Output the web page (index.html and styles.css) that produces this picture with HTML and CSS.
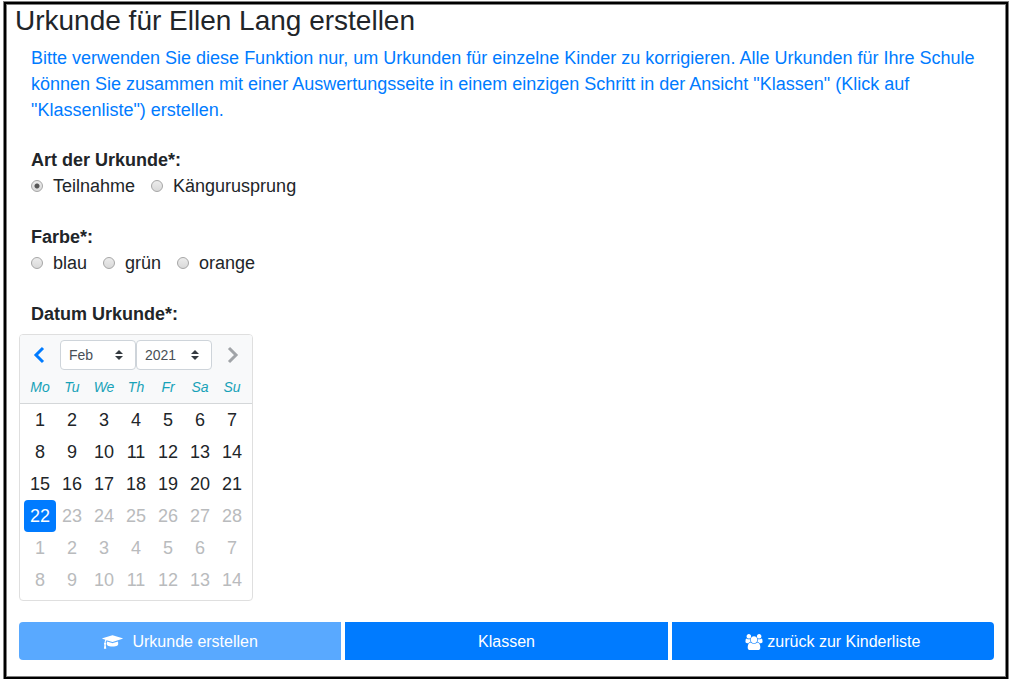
FILE: index.html
```html
<!DOCTYPE html>
<html lang="de">
<head>
<meta charset="utf-8">
<meta name="viewport" content="width=device-width, initial-scale=1">
<title>Urkunde für Ellen Lang erstellen</title>
<link rel="stylesheet" href="styles.css">
</head>
<body>
<main class="panel">
  <h1 class="title">Urkunde für Ellen Lang erstellen</h1>
  <form class="form">
    <p class="hint">Bitte verwenden Sie diese Funktion nur, um Urkunden für einzelne Kinder zu korrigieren. Alle Urkunden für Ihre Schule können Sie zusammen mit einer Auswertungsseite in einem einzigen Schritt in der Ansicht "Klassen" (Klick auf "Klassenliste") erstellen.</p>

    <div class="group" role="radiogroup" aria-labelledby="kind-label">
      <div class="group-label" id="kind-label">Art der Urkunde*:</div>
      <div class="options">
        <label class="option"><input class="radio" type="radio" name="kind" checked>Teilnahme</label>
        <label class="option"><input class="radio" type="radio" name="kind">Kängurusprung</label>
      </div>
    </div>

    <div class="group" role="radiogroup" aria-labelledby="color-label">
      <div class="group-label" id="color-label">Farbe*:</div>
      <div class="options">
        <label class="option"><input class="radio" type="radio" name="color">blau</label>
        <label class="option"><input class="radio" type="radio" name="color">grün</label>
        <label class="option"><input class="radio" type="radio" name="color">orange</label>
      </div>
    </div>

    <div class="group-label" id="date-label">Datum Urkunde*:</div>
    <div class="calendar" role="group" aria-labelledby="date-label">
      <div class="calendar-nav">
        <button class="arrow" type="button" aria-label="Previous month"><svg width="12" height="18" viewBox="0 0 12 18"><path d="M10 2 3 9l7 7"/></svg></button>
        <span class="picker">
          <select class="picker-select" aria-label="Select month"><option>Feb</option></select>
          <svg class="picker-caret" width="8" height="10" viewBox="0 0 8 10"><path d="M4 0 0 4h8zM4 10 0 6h8z"/></svg>
        </span>
        <span class="picker">
          <select class="picker-select" aria-label="Select year"><option>2021</option></select>
          <svg class="picker-caret" width="8" height="10" viewBox="0 0 8 10"><path d="M4 0 0 4h8zM4 10 0 6h8z"/></svg>
        </span>
        <button class="arrow arrow-next" type="button" aria-label="Next month" disabled><svg width="12" height="18" viewBox="0 0 12 18"><path d="m2 2 7 7-7 7"/></svg></button>
      </div>
      <table class="month">
        <thead class="weekdays">
          <tr><th>Mo</th><th>Tu</th><th>We</th><th>Th</th><th>Fr</th><th>Sa</th><th>Su</th></tr>
        </thead>
        <tbody>
          <tr><td><button class="day" type="button">1</button></td><td><button class="day" type="button">2</button></td><td><button class="day" type="button">3</button></td><td><button class="day" type="button">4</button></td><td><button class="day" type="button">5</button></td><td><button class="day" type="button">6</button></td><td><button class="day" type="button">7</button></td></tr>
          <tr><td><button class="day" type="button">8</button></td><td><button class="day" type="button">9</button></td><td><button class="day" type="button">10</button></td><td><button class="day" type="button">11</button></td><td><button class="day" type="button">12</button></td><td><button class="day" type="button">13</button></td><td><button class="day" type="button">14</button></td></tr>
          <tr><td><button class="day" type="button">15</button></td><td><button class="day" type="button">16</button></td><td><button class="day" type="button">17</button></td><td><button class="day" type="button">18</button></td><td><button class="day" type="button">19</button></td><td><button class="day" type="button">20</button></td><td><button class="day" type="button">21</button></td></tr>
          <tr><td><button class="day day-selected" type="button">22</button></td><td><button class="day" type="button" disabled>23</button></td><td><button class="day" type="button" disabled>24</button></td><td><button class="day" type="button" disabled>25</button></td><td><button class="day" type="button" disabled>26</button></td><td><button class="day" type="button" disabled>27</button></td><td><button class="day" type="button" disabled>28</button></td></tr>
          <tr><td><button class="day" type="button" disabled>1</button></td><td><button class="day" type="button" disabled>2</button></td><td><button class="day" type="button" disabled>3</button></td><td><button class="day" type="button" disabled>4</button></td><td><button class="day" type="button" disabled>5</button></td><td><button class="day" type="button" disabled>6</button></td><td><button class="day" type="button" disabled>7</button></td></tr>
          <tr><td><button class="day" type="button" disabled>8</button></td><td><button class="day" type="button" disabled>9</button></td><td><button class="day" type="button" disabled>10</button></td><td><button class="day" type="button" disabled>11</button></td><td><button class="day" type="button" disabled>12</button></td><td><button class="day" type="button" disabled>13</button></td><td><button class="day" type="button" disabled>14</button></td></tr>
        </tbody>
      </table>
    </div>

    <div class="actions">
      <button class="action action-wide-gap" type="submit" disabled>
        <svg class="action-icon" width="21" height="16" viewBox="0 0 2304 1792"><path d="M1774 836l18 316q4 69-82 128t-235 93.5-323 34.5-323-34.5-235-93.5-82-128l18-316 574 181q22 7 48 7t48-7zm530-324q0 23-22 31l-1120 352q-4 1-10 1t-10-1l-652-206q-43 34-71 111.5t-34 178.5q63 36 63 109 0 69-58 107l58 433q2 14-8 25-9 11-24 11h-192q-15 0-24-11-10-11-8-25l58-433q-58-38-58-107 0-73 65-111 11-207 98-330l-333-104q-22-8-22-31t22-31l1120-352q4-1 10-1t10 1l1120 352q22 8 22 31z"/></svg>
        <span>Urkunde erstellen</span>
      </button>
      <button class="action" type="button"><span>Klassen</span></button>
      <button class="action" type="button">
        <svg class="action-icon" width="18" height="16" viewBox="0 0 1920 1792"><path d="M593 896q-162 5-265 128h-134q-82 0-138-40.5t-56-118.5q0-353 124-353 6 0 43.5 21t97.5 42.5 119 21.5q67 0 133-23-5 37-5 66 0 139 81 256zm1071 637q0 120-73 189.5t-194 69.5h-874q-121 0-194-69.5t-73-189.5q0-53 3.5-103.5t14-109 26.5-108.5 43-97.5 62-81 85.5-53.5 111.5-20q10 0 43 21.5t73 48 107 48 135 21.5 135-21.5 107-48 73-48 43-21.5q61 0 111.5 20t85.5 53.5 62 81 43 97.5 26.5 108.5 14 109 3.5 103.5zm-1024-1277q0 106-75 181t-181 75-181-75-75-181 75-181 181-75 181 75 75 181zm704 384q0 159-112.5 271.5t-271.5 112.5-271.5-112.5-112.5-271.5 112.5-271.5 271.5-112.5 271.5 112.5 112.5 271.5zm576 225q0 78-56 118.5t-138 40.5h-134q-103-123-265-128 81-117 81-256 0-29-5-66 66 23 133 23 59 0 119-21.5t97.5-42.5 43.5-21q124 0 124 353zm-128-609q0 106-75 181t-181 75-181-75-75-181 75-181 181-75 181 75 75 181z"/></svg>
        <span>zurück zur Kinderliste</span>
      </button>
    </div>
  </form>
</main>
</body>
</html>
```
FILE: styles.css
```css
* { box-sizing: border-box; }

body {
  margin: 0;
  background: #fff;
  color: #212529;
  font-family: "Liberation Sans", Arial, sans-serif;
  font-size: 18px;
  line-height: 26px;
}

button, select { font-family: inherit; }

.panel {
  margin: 2px 3px 0 4px;
  padding: 0 12px 17px 9px;
  border: 2px solid #000;
  outline: 1px solid #808080;
  box-shadow: inset 0 0 0 1px #808080;
}

.title {
  margin: 0;
  font-size: 28px;
  font-weight: 400;
  line-height: 34px;
}

.form { padding-left: 4px; }

.hint {
  margin: 7px 12px 24px;
  color: #007bff;
}

.group { margin-bottom: 25px; }

.group-label {
  padding-left: 12px;
  font-weight: 700;
}

.options {
  display: flex;
  flex-wrap: wrap;
  gap: 16px;
  padding-left: 12px;
}

.option {
  display: flex;
  align-items: center;
  gap: 10px;
}

.radio {
  appearance: none;
  width: 12px;
  height: 12px;
  margin: 0;
  border: 1px solid #a6a6a6;
  border-radius: 50%;
  background: linear-gradient(#ececec, #d9d9d9);
}

.radio:checked {
  background: radial-gradient(circle, #555 0 2px, transparent 3px), linear-gradient(#ececec, #d9d9d9);
}

.calendar {
  width: max-content;
  margin-top: 7px;
  border: 1px solid #dfdfdf;
  border-radius: 4px;
  overflow: hidden;
}

.calendar-nav {
  display: flex;
  padding: 5px 4px 0;
  background: #f8f9fa;
}

.arrow {
  display: flex;
  flex: 1;
  align-items: center;
  justify-content: flex-start;
  padding: 0 9px;
  border: 0;
  background: none;
}

.arrow-next { justify-content: flex-end; }

.arrow path {
  fill: none;
  stroke: #007bff;
  stroke-width: 3;
}

.arrow:disabled path { stroke: #a1a4a8; }

.picker {
  position: relative;
  width: 76px;
}

.picker-select {
  display: block;
  appearance: none;
  width: 100%;
  height: 30px;
  padding: 0 8px;
  border: 1px solid #ced4da;
  border-radius: 4px;
  background: #fff;
  color: #495057;
  font-size: 14px;
}

.picker-caret {
  position: absolute;
  top: 10px;
  right: 13px;
  fill: #343a40;
  pointer-events: none;
}

.month { border-collapse: collapse; }

.month th, .month td {
  width: 32px;
  height: 32px;
  padding: 0;
}

.month th:first-child, .month td:first-child { padding-left: 4px; width: 36px; }
.month th:last-child, .month td:last-child { padding-right: 4px; width: 36px; }
.month tbody tr:last-child td { padding-bottom: 4px; }

.weekdays {
  border-bottom: 1px solid #d4d7d9;
  background: #f8f9fa;
  color: #17a2b8;
}

.month th {
  height: 33px;
  padding-top: 2px;
  font-size: 14px;
  font-style: italic;
  font-weight: 400;
}

.day {
  display: block;
  width: 32px;
  height: 32px;
  padding: 2px 0 0;
  border: 0;
  border-radius: 4px;
  background: none;
  color: #212529;
  font-size: 18px;
}

.day:disabled { color: #b9bbbd; }

.day-selected {
  background: #007bff;
  color: #fff;
}

.actions {
  display: grid;
  grid-template-columns: repeat(3, 1fr);
  gap: 4px;
  margin-top: 21px;
}

.action {
  display: flex;
  align-items: center;
  justify-content: center;
  gap: 4px;
  height: 38px;
  padding: 2px 12px 0;
  border: 0;
  background: #007bff;
  color: #fff;
  font-size: 16px;
}

.action:first-child { border-radius: 4px 0 0 4px; }
.action:last-child { border-radius: 0 4px 4px 0; }
.action:disabled { background: #59a9ff; }
.action-wide-gap { gap: 9px; }
.action-icon { fill: currentColor; }
```
